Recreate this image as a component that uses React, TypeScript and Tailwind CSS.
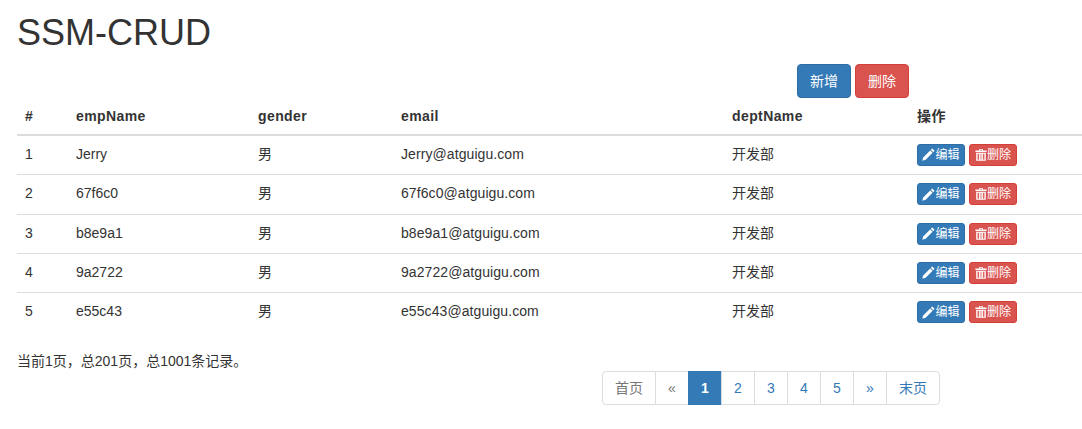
import React from 'react';

const emps = [
  { id: 1, name: 'Jerry' },
  { id: 2, name: '67f6c0' },
  { id: 3, name: 'b8e9a1' },
  { id: 4, name: '9a2722' },
  { id: 5, name: 'e55c43' },
];

function PencilIcon() {
  return (
    <svg viewBox="0 0 13 13" className="w-[13px] h-[13px] shrink-0" fill="currentColor">
      <path d="M10.2 0.4 L12.6 2.8 L11.2 4.2 L8.8 1.8 Z" />
      <path d="M8.2 2.4 L10.6 4.8 L3.6 11.8 L0.3 12.7 L1.2 9.4 Z" />
    </svg>
  );
}

function TrashIcon() {
  return (
    <svg viewBox="0 0 12 12" className="w-3 h-3 shrink-0" fill="currentColor">
      <path d="M4 0.3 H8 V1.6 H11.6 V3 H0.4 V1.6 H4 Z M5 1 V1.6 H7 V1 Z" fillRule="evenodd" />
      <path d="M1.2 3.7 H10.8 V11.7 H1.2 Z M2.6 4.7 V10.7 H3.9 V4.7 Z M4.9 4.7 V10.7 H5.4 V4.7 Z M6.6 4.7 V10.7 H7.1 V4.7 Z M8.1 4.7 V10.7 H9.4 V4.7 Z" fillRule="evenodd" />
    </svg>
  );
}

const pageCell = 'flex items-center justify-center h-[34px] border -ml-px';
const pageLink = 'border-[#ddd] bg-white';
const cell = 'px-2 pt-2 align-top leading-5';

export default function App() {
  return (
    <div className="w-[1082px] h-[429px] overflow-hidden bg-white pl-[17px] text-sm text-[#333] font-['Liberation_Sans','Noto_Sans_CJK_SC',sans-serif]">
      <h1 className="pt-[13px] text-[36px] leading-[39.6px] font-normal">SSM-CRUD</h1>

      <div className="flex gap-1 mt-[11px] ml-[780px]">
        <button className="w-[54px] h-[34px] rounded bg-[#337ab7] border border-[#2e6da4] text-white">新增</button>
        <button className="w-[54px] h-[34px] rounded bg-[#d9534f] border border-[#d43f3a] text-white">删除</button>
      </div>

      <table className="w-[1065px] table-fixed border-collapse">
        <colgroup>
          <col className="w-[51px]" />
          <col className="w-[182px]" />
          <col className="w-[143px]" />
          <col className="w-[331px]" />
          <col className="w-[185px]" />
          <col />
        </colgroup>
        <thead>
          <tr className="h-[37px] border-b-2 border-[#ddd] text-left tracking-[0.4px]">
            <th className="px-2 font-bold">#</th>
            <th className="px-2 font-bold">empName</th>
            <th className="px-2 font-bold">gender</th>
            <th className="px-2 font-bold">email</th>
            <th className="px-2 font-bold">deptName</th>
            <th className="px-2 font-bold">操作</th>
          </tr>
        </thead>
        <tbody>
          {emps.map(e => (
            <tr key={e.id} className="h-[39.25px] first:h-[40.25px] border-b border-[#ddd] last:border-b-0">
              <td className={cell}>{e.id}</td>
              <td className={cell}>{e.name}</td>
              <td className={cell}>男</td>
              <td className={`${cell} tracking-[0.08px]`}>{e.name}@atguigu.com</td>
              <td className={cell}>开发部</td>
              <td className={cell}>
                <div className="flex gap-1">
                  <button className="flex items-center justify-center w-[48px] h-[22px] rounded-[3px] bg-[#337ab7] border border-[#2e6da4] text-white text-xs">
                    <PencilIcon />编辑
                  </button>
                  <button className="flex items-center justify-center w-[48px] h-[22px] rounded-[3px] bg-[#d9534f] border border-[#d43f3a] text-white text-xs">
                    <TrashIcon />删除
                  </button>
                </div>
              </td>
            </tr>
          ))}
        </tbody>
      </table>

      <p className="mt-[19px] leading-5">当前1页，总201页，总1001条记录。</p>

      <nav className="flex ml-[585px] text-[#337ab7]">
        <span className={`${pageCell} ${pageLink} ml-0 w-[54px] rounded-l text-[#777]`}>首页</span>
        <span className={`${pageCell} ${pageLink} w-[34px] text-[#777]`}>«</span>
        <span className={`${pageCell} w-[34px] bg-[#337ab7] border-[#337ab7] text-white font-bold`}>1</span>
        <span className={`${pageCell} ${pageLink} w-[34px]`}>2</span>
        <span className={`${pageCell} ${pageLink} w-[34px]`}>3</span>
        <span className={`${pageCell} ${pageLink} w-[34px]`}>4</span>
        <span className={`${pageCell} ${pageLink} w-[34px]`}>5</span>
        <span className={`${pageCell} ${pageLink} w-[34px]`}>»</span>
        <span className={`${pageCell} ${pageLink} w-[54px] rounded-r`}>末页</span>
      </nav>
    </div>
  );
}
